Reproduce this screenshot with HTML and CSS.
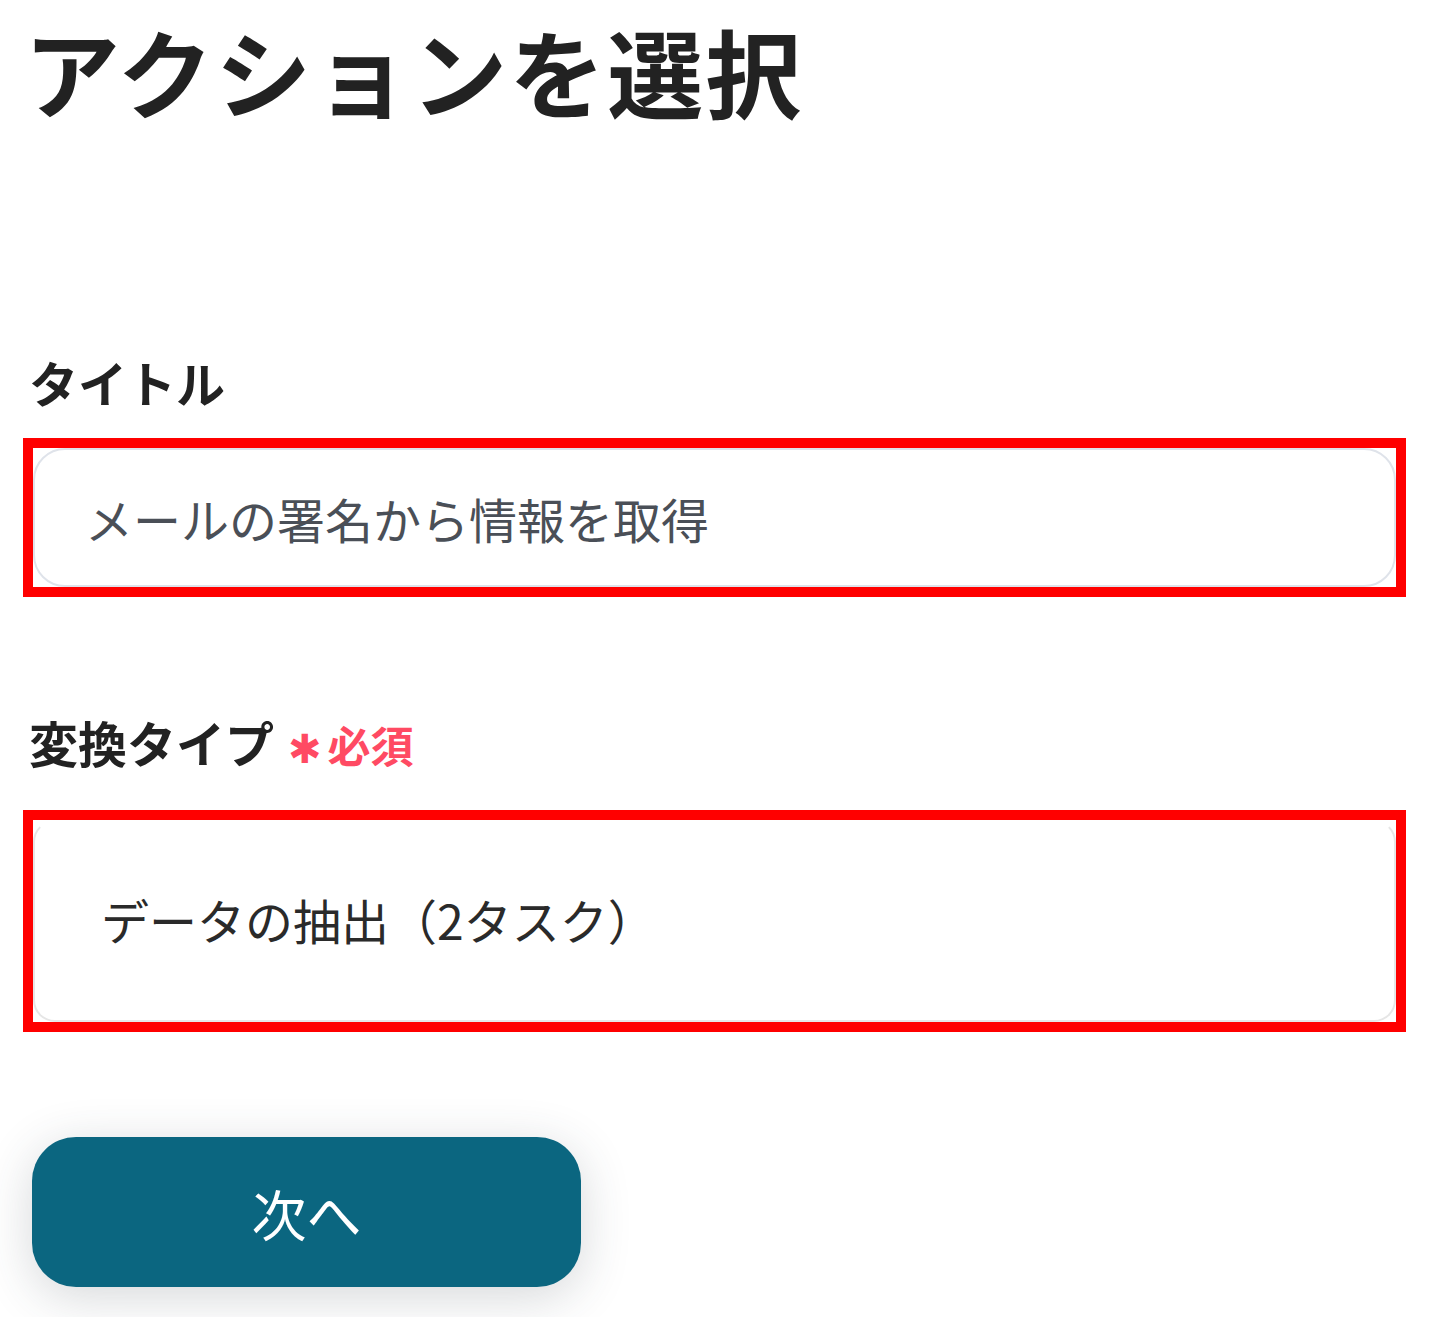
FILE: index.html
```html
<!DOCTYPE html>
<html lang="ja">
<head>
<meta charset="utf-8">
<title>アクションを選択</title>
<link rel="stylesheet" href="styles.css">
</head>
<body>
<main class="page">
  <h1 class="title">アクションを選択</h1>

  <section class="field field-title">
    <div class="label">タイトル</div>
    <div class="frame frame-title">
      <div class="input input-text">メールの署名から情報を取得</div>
    </div>
  </section>

  <section class="field field-type">
    <div class="label">変換タイプ<span class="required"><span class="star">✱</span>必須</span></div>
    <div class="frame frame-type">
      <div class="input input-select">データの抽出（2タスク）</div>
    </div>
  </section>

  <div class="actions">
    <button class="next">次へ</button>
  </div>
</main>
</body>
</html>
```

FILE: styles.css
```css
html, body {
  margin: 0;
  padding: 0;
  background: #ffffff;
}

body {
  font-family: "Noto Sans CJK JP", "Noto Sans", sans-serif;
  color: #222222;
}

.page {
  display: flex;
  flex-direction: column;
  padding: 0 45px 0 23px;
}

.title {
  margin: 0 0 0 1px;
  font-size: 96px;
  line-height: normal;
  font-weight: 700;
  color: #222222;
  letter-spacing: 2px;
  white-space: nowrap;
}

.field {
  display: flex;
  flex-direction: column;
}

.field-title {
  margin-top: 218px;
}

.field-type {
  margin-top: 120px;
}

.label {
  margin-left: 6px;
  font-size: 49px;
  line-height: 1;
  font-weight: 700;
  color: #222222;
  display: flex;
  align-items: baseline;
}

.required {
  margin-left: 14px;
  font-size: 43px;
  color: #ff4a63;
  font-weight: 700;
  display: inline-flex;
  align-items: baseline;
}

.star {
  font-family: "DejaVu Sans", sans-serif;
  font-size: 40px;
  margin-right: 6px;
}

.frame {
  border: 10px solid #ff0000;
}

.frame-title {
  margin-top: 32px;
}

.frame-type {
  margin-top: 41px;
}

.input {
  display: flex;
  align-items: center;
  background: #ffffff;
  font-size: 48px;
  line-height: 1;
}

.input-text {
  height: 139px;
  border: 2px solid #dfe3ea;
  border-radius: 32px;
  box-sizing: border-box;
  padding-left: 50px;
  color: #4a4f57;
}

.input-select {
  height: 202px;
  border-radius: 22px;
  box-sizing: border-box;
  border: 2px solid #e6e6e6;
  border-top-color: #ffffff;
  padding-left: 66px;
  padding-bottom: 4px;
  color: #2a2a2a;
}

.actions {
  margin-top: 105px;
  padding-left: 9px;
  padding-bottom: 30px;
}

.next {
  width: 549px;
  height: 150px;
  border: none;
  border-radius: 44px;
  background: #0b6680;
  color: #ffffff;
  font-family: "Noto Sans CJK JP", "Noto Sans", sans-serif;
  font-size: 55px;
  font-weight: 400;
  box-shadow: 0 10px 50px rgba(50, 60, 70, 0.2);
  cursor: pointer;
}
```
